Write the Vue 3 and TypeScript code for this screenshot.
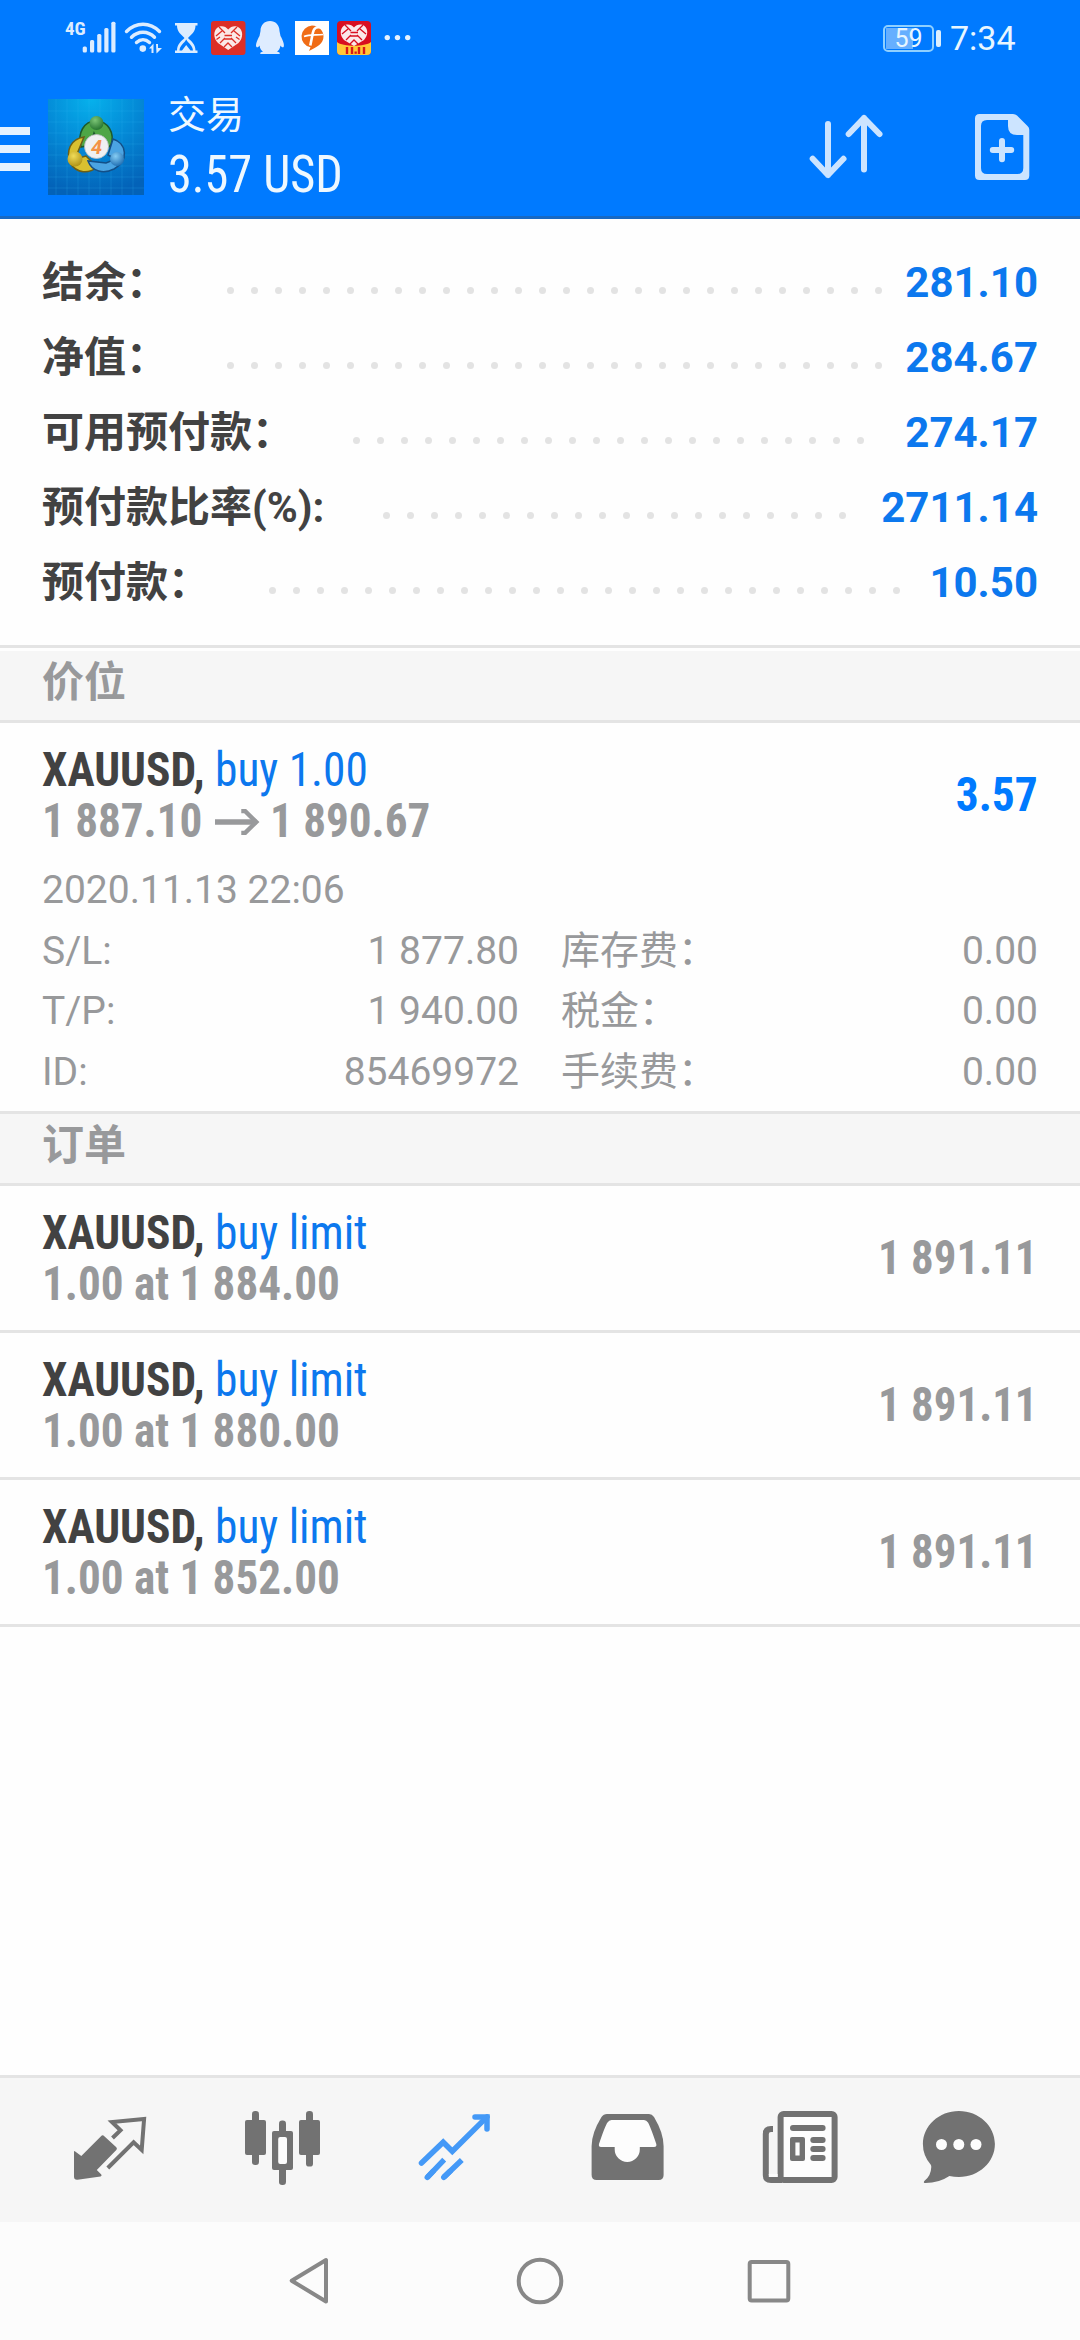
<script setup lang="ts">
interface SummaryRow {
  label: string
  value: string
  dots: number
}

interface Order {
  symbol: string
  kind: string
  terms: string
  price: string
}

const summary: SummaryRow[] = [
  { label: '结余：', value: '281.10', dots: 28 },
  { label: '净值：', value: '284.67', dots: 28 },
  { label: '可用预付款：', value: '274.17', dots: 22 },
  { label: '预付款比率(%):', value: '2711.14', dots: 20 },
  { label: '预付款：', value: '10.50', dots: 27 },
]

const details: string[][] = [
  ['S/L:', '1 877.80', '库存费：', '0.00'],
  ['T/P:', '1 940.00', '税金：', '0.00'],
  ['ID:', '85469972', '手续费：', '0.00'],
]

const orders: Order[] = [
  { symbol: 'XAUUSD,', kind: 'buy limit', terms: '1.00 at 1 884.00', price: '1 891.11' },
  { symbol: 'XAUUSD,', kind: 'buy limit', terms: '1.00 at 1 880.00', price: '1 891.11' },
  { symbol: 'XAUUSD,', kind: 'buy limit', terms: '1.00 at 1 852.00', price: '1 891.11' },
]
</script>

<template>
  <div class="screen">
    <header class="top">
      <div class="status">
        <span class="net">4G</span>
        <svg class="status-icons" width="336" height="40" viewBox="82 18 336 40">
          <g fill="#dcecff">
            <rect x="82.7" y="46.5" width="4.2" height="6" rx="1.5" />
            <rect x="90" y="40" width="4.2" height="12.5" rx="1.5" />
            <rect x="97.2" y="34" width="4.2" height="18.5" rx="1.5" />
            <rect x="104.3" y="28" width="4.2" height="24.5" rx="1.5" />
            <rect x="111.3" y="21.7" width="4.2" height="30.8" rx="1.5" />
          </g>
          <g fill="none" stroke="#dcecff" stroke-width="3.4" stroke-linecap="round">
            <path d="M126.5 31.5C136 21.8 150 21.8 159.5 31.5" />
            <path d="M131.5 37.3C138 30.6 148 30.6 154.5 37.3" />
            <path d="M136.5 42.5C140.5 38.7 145.5 38.7 149.5 42.5" />
          </g>
          <circle cx="142.8" cy="48.6" r="3.3" fill="#dcecff" />
          <path d="M149 48.5L153.500 43.5V53H151.5V48.5ZM156 44H158V48H162L156.5 53.5Z" fill="#dcecff" />
          <g fill="#dcecff">
            <path d="M175 23H197.500V25.600H195.500C195.500 32 191 35 188 38C191 41 195.500 44 195.500 50.400H197.500V53H175V50.400H177C177 44 181.500 41 184.500 38C181.500 35 177 32 177 25.600H175Z" />
            <path d="M179.500 50.400C180 45 184 43.500 186.200 39.500C188.500 43.500 192.500 45 193 50.400H190.500L186.200 45L182 50.400Z" fill="#007aff" />
          </g>
          <rect x="211" y="21" width="34.5" height="34" rx="3" fill="#dc2f27" />
          <path d="M228.200 50L218 43C213 38 213.500 31 217 28C220.500 25 225.500 26 228.200 29.500C231 26 236 25 239.500 28C243 31 243.500 38 238.500 43Z" fill="#fbe9e6" />
          <path d="M219 27L225 33M237 27L231 33M216 36L222 31M240 36L234 31M220 43L225 38M236 43L231 38M224 47L228 43L232 47M224.500 35.500H232M224.500 39H232M216.500 39.500L220 37M239.500 39.500L236 37" stroke="#dc2f27" stroke-width="1.300" fill="none" />
          <path d="M270 21C275.500 21 279.500 25 279.500 31L280.500 36C282.500 39.500 284.500 44 283.800 46.500C283 48.500 281 46.500 280.500 45.500C280 48.500 279 50.500 277 51.500C279 52 280.500 53 279.500 54H260.500C259.500 53 261 52 263 51.500C261 50.500 260 48.500 259.500 45.500C259 46.500 257 48.500 256.200 46.500C255.500 44 257.500 39.500 259.500 36L260.500 31C260.500 25 264.500 21 270 21Z" fill="#deecff" />
          <rect x="295" y="21" width="34" height="34" fill="#fff" />
          <path d="M312 25.500A11.500 11 0 0 1 323.500 36.500C323.500 44 317 46.500 309 51L310.500 47.300A11 11 0 0 1 312 25.500Z" fill="#f06c15" />
          <path d="M324 28.500C317 25.500 313.800 27.500 312.800 33L310.300 45.500" fill="none" stroke="#fff" stroke-width="2.600" />
          <path d="M304 36.500C310 33.800 316 35.500 323 34.500" fill="none" stroke="#fff" stroke-width="1.700" />
          <rect x="337" y="21" width="34" height="34" rx="4" fill="#d80f20" />
          <path d="M337 42C343 47 365 47 371 42V51Q371 55 367 55H341Q337 55 337 51Z" fill="#ffc838" />
          <path d="M354 46L344 40C339.500 35 340 29 343.500 26C347 23.500 351.500 24.500 354 27.500C356.500 24.500 361 23.500 364.500 26C368 29 368.500 35 364 40Z" fill="#fbe9ea" />
          <path d="M345 25L351 31M363 25L357 31M342 34L348 29M366 34L360 29M346 40L351 35M362 40L357 35M350 44L354 40L358 44M350.500 32.500H358M350.500 36H358" stroke="#d80f20" stroke-width="1.300" fill="none" />
          <path d="M347 47V54M352 47V54M359 47V54M364 47V54" stroke="#d81818" stroke-width="2.400" />
          <rect x="354.5" y="51.5" width="2.3" height="2.3" fill="#d81818" />
          <g fill="#e6f2ff">
            <circle cx="387.3" cy="37.6" r="2.7" />
            <circle cx="397.5" cy="37.6" r="2.7" />
            <circle cx="407.7" cy="37.6" r="2.7" />
          </g>
        </svg>
        <div class="battery"><span class="charge"></span><span class="pct">59</span></div>
        <span class="nub"></span>
        <span class="clock">7:34</span>
      </div>

      <div class="bar">
        <div class="menu"><i></i><i></i><i></i></div>
        <svg class="logo" width="96" height="96" viewBox="0 0 96 96">
          <defs>
            <radialGradient id="sky" cx="0.45" cy="0" r="1">
              <stop offset="0" stop-color="#06b1ec" />
              <stop offset="0.5" stop-color="#0489d6" />
              <stop offset="1" stop-color="#0362b8" />
            </radialGradient>
            <radialGradient id="green" cx="0.4" cy="0.3" r="0.8">
              <stop offset="0" stop-color="#7cc576" />
              <stop offset="1" stop-color="#1c6b28" />
            </radialGradient>
            <radialGradient id="gold" cx="0.4" cy="0.3" r="0.8">
              <stop offset="0" stop-color="#f0dc58" />
              <stop offset="1" stop-color="#a88a10" />
            </radialGradient>
            <radialGradient id="azure" cx="0.4" cy="0.3" r="0.8">
              <stop offset="0" stop-color="#86cdf4" />
              <stop offset="1" stop-color="#1565ac" />
            </radialGradient>
          </defs>
          <rect width="96" height="96" fill="url(#sky)" />
          <path d="M8 0V96M19 0V96M30 0V96M41 0V96M52 0V96M63 0V96M74 0V96M85 0V96M0 12H96M0 23H96M0 34H96M0 45H96M0 56H96M0 67H96M0 78H96M0 89H96" stroke="#35b5ee" stroke-opacity="0.2" stroke-width="1" />
          <path d="M33 48C29 34 36 22 48 22C60 22 67 34 63 46L55 52L46 34L42 46Z" fill="#4ea646" stroke="#1d5a2c" stroke-width="1.5" />
          <path d="M36 38C22 40 18 52 22 64C29 75 41 75 49 68L38 57L27 60Z" fill="#d9c030" stroke="#6b5e16" stroke-width="1.5" />
          <path d="M40 62C44 73 56 75 66 70C81 62 79 44 65 40L60 56L68 60L58 64Z" fill="#4ba4e2" stroke="#134f87" stroke-width="1.5" />
          <circle cx="48.5" cy="24" r="7" fill="url(#green)" />
          <circle cx="27" cy="60" r="7.5" fill="url(#gold)" />
          <circle cx="69" cy="60" r="7" fill="url(#azure)" />
          <circle cx="48.5" cy="47.500" r="12" fill="#eff0f2" stroke="#b9bcc2" stroke-width="0.8" />
          <text x="48.5" y="55" text-anchor="middle" font-family="Roboto, sans-serif" font-weight="700" font-style="italic" font-size="20" fill="#f39246">4</text>
        </svg>
        <div class="titles">
          <div class="title">交易</div>
          <div class="total cond">3.57 USD</div>
        </div>
        <svg class="sort" width="76" height="72" viewBox="808 110 76 72" fill="none" stroke="#cce4ff" stroke-width="6" stroke-linecap="round" stroke-linejoin="round">
          <path d="M828 124V175M812.700 158.800L828 175L843.500 158.800" />
          <path d="M864 169.500V118M848.700 134L864 118L879.500 134" />
        </svg>
        <svg class="add" width="56" height="68" viewBox="974 113 56 68">
          <path fill="#cce4ff" fill-rule="evenodd" d="M979.500 114H1013Q1015.500 114 1017 115.500L1027.500 126Q1029.300 127.500 1029.300 130V175.500Q1029.300 180 1025 180H979.500Q975 180 975 175.500V118.500Q975 114 979.500 114ZM987 120Q981 120 981 126V168Q981 174 987 174H1017.300Q1023.300 174 1023.300 168V135H1017Q1008 135 1008 126V120Z" />
          <path d="M1002 141V159.300M992.800 150H1011.200" stroke="#cce4ff" stroke-width="6" stroke-linecap="round" />
        </svg>
      </div>
    </header>

    <section class="summary">
      <div v-for="row in summary" :key="row.label" class="sum-row">
        <span class="sum-label">{{ row.label }}</span>
        <span class="leader"><i v-for="n in row.dots" :key="n"></i></span>
        <span class="sum-value">{{ row.value }}</span>
      </div>
    </section>

    <h2 class="group first">价位</h2>
    <section class="position">
      <div class="deal">
        <div>
          <div class="line cond"><b>XAUUSD,</b> <span class="kind">buy 1.00</span></div>
          <div class="line cond terms">
            <span>1 887.10</span>
            <svg class="arrow" width="48" height="26" viewBox="0 0 48 26" fill="none" stroke="#98999b" stroke-width="5.5">
              <path d="M0 13H44" />
              <path d="M28 2H32L44 13L32 24H28" stroke-width="4.5" />
            </svg>
            <span>1 890.67</span>
          </div>
        </div>
        <div class="profit cond">3.57</div>
      </div>
      <div class="details">
        <div class="detail">2020.11.13 22:06</div>
        <div v-for="d in details" :key="d[0]" class="detail">
          <div class="pair"><span>{{ d[0] }}</span><span>{{ d[1] }}</span></div>
          <div class="pair"><span>{{ d[2] }}</span><span>{{ d[3] }}</span></div>
        </div>
      </div>
    </section>

    <h2 class="group">订单</h2>
    <section class="orders">
      <div v-for="o in orders" :key="o.terms" class="order">
        <div>
          <div class="line cond"><b>{{ o.symbol }}</b> <span class="kind">{{ o.kind }}</span></div>
          <div class="line cond terms">{{ o.terms }}</div>
        </div>
        <div class="price cond">{{ o.price }}</div>
      </div>
    </section>

    <nav class="tabs">
      <svg class="tab" viewBox="0 0 84 84">
        <path d="M6 48Q6 46.500 7.200 47.500L13.300 52L33 32.200Q34.600 30.500 36.300 32.200L48.300 43.300Q49.600 44.700 48.300 46.100L28.800 66L33.300 70.600Q34.200 72 32.500 72.400L9.500 75.700Q6 76 6 72.500Z" fill="#727272" />
        <path d="M44.500 34L52.500 26.300L44 18L76.100 15L73.700 46L65.600 38.300L39.800 64" fill="none" stroke="#727272" stroke-width="4" />
      </svg>
      <svg class="tab" viewBox="0 0 84 84" fill="#727272">
        <rect x="4" y="16" width="21" height="35" rx="2" />
        <rect x="11" y="7" width="7" height="54" rx="3.2" />
        <rect x="58" y="16" width="21" height="35" rx="2" />
        <rect x="65" y="7" width="7" height="55.6" rx="3.2" />
        <rect x="31" y="27" width="21" height="39" rx="2" />
        <rect x="38" y="16.5" width="7" height="64.5" rx="3.2" />
        <rect x="37.2" y="33" width="8.8" height="27" rx="2" fill="#fdfdfd" />
      </svg>
      <svg class="tab" viewBox="0 0 84 84" fill="none" stroke="#4499f7" stroke-width="5.500">
        <path d="M8.500 59L30.200 38.200L39.300 47.300L74 12.900" stroke-linecap="round" />
        <path d="M62 12.900H74V25" stroke-linecap="round" />
        <path d="M14.300 73.300L31.200 55.700M30.800 73.300L48.800 56" />
        <path d="M14.300 73.300L20 67.400M30.800 73.300L37 67.300" stroke-linecap="round" />
      </svg>
      <svg class="tab" viewBox="0 0 84 84">
        <path fill="#727272" d="M21 10H63Q66 10 68 13Q77.600 29 77.600 42V71Q77.600 76 72.600 76H10.600Q5.600 76 5.600 71V42Q5.600 29 15.500 13Q17.500 10 21 10Z" />
        <path fill="#fdfdfd" d="M25.500 16H58Q60.500 16 62 18.500Q64 21.500 70.300 40Q71 43 68 43H53.800V45.500A12.500 12.500 0 0 1 28.700 45.500V43H15Q12.300 43 13 40Q19 22 21.500 18.500Q23 16 25.500 16Z" />
      </svg>
      <svg class="tab" viewBox="0 0 84 84">
        <rect x="22.6" y="10" width="54" height="66" rx="3" fill="#fdfdfd" stroke="#727272" stroke-width="6" />
        <path d="M15 25H13Q7.800 25 7.800 30V71Q7.800 76 13 76H24" fill="none" stroke="#727272" stroke-width="6" />
        <rect x="10.8" y="70" width="8.8" height="3" fill="#fdfdfd" />
        <g fill="#727272">
          <rect x="32" y="21" width="35.6" height="6" rx="3" />
          <rect x="52.3" y="33" width="15.3" height="6" rx="3" />
          <rect x="52.3" y="42" width="15.3" height="6" rx="3" />
          <rect x="52.3" y="51" width="15.3" height="6" rx="3" />
          <rect x="32" y="33" width="15" height="24" rx="2" />
        </g>
        <rect x="37.4" y="38.5" width="4.2" height="13" fill="#fdfdfd" />
      </svg>
      <svg class="tab" viewBox="0 0 84 84">
        <path fill="#727272" d="M41.900 7C61.800 7 77.900 21.800 77.900 40S61.800 73 41.900 73Q37 73 32.400 72Q22 79 8.500 79Q5.900 79 7.300 77Q14 72 14.300 63Q14.400 61.600 13.600 60.500Q5.900 51.500 5.900 40C5.900 21.800 22 7 41.900 7Z" />
        <g fill="#fdfdfd">
          <circle cx="24.5" cy="40.5" r="5.5" />
          <circle cx="41.8" cy="40.5" r="5.5" />
          <circle cx="59" cy="40.5" r="5.5" />
        </g>
      </svg>
    </nav>

    <footer class="sysnav">
      <svg width="52" height="52" viewBox="0 0 52 52" fill="none" stroke="#888" stroke-width="4" stroke-linejoin="round">
        <path d="M6.700 25.700L41 5V46.500Z" />
      </svg>
      <svg width="52" height="52" viewBox="0 0 52 52" fill="none" stroke="#888" stroke-width="4">
        <circle cx="26" cy="26" r="21.3" />
      </svg>
      <svg width="52" height="52" viewBox="0 0 52 52" fill="none" stroke="#888" stroke-width="4">
        <rect x="6.7" y="7" width="38.6" height="38.6" rx="2" />
      </svg>
    </footer>
  </div>
</template>

<style>
body {
  background: #fefefe;
}
</style>

<style scoped>
.screen {
  width: 1080px;
  height: 2340px;
  display: flex;
  flex-direction: column;
  background: #fefefe;
  font-family: Roboto, "Noto Sans CJK SC", sans-serif;
  color: #424242;
  overflow: hidden;
}

.cond {
  font-family: "Roboto Condensed", Roboto, "Noto Sans CJK SC", sans-serif;
  font-stretch: 75%;
  transform: scaleX(0.946);
  transform-origin: left center;
}

.top {
  height: 216px;
  flex: none;
  background: #007aff;
  border-bottom: 3px solid #1769c4;
}

.status {
  height: 76px;
  display: flex;
  align-items: center;
  padding-left: 65px;
}

.net {
  width: 17px;
  font-size: 19px;
  line-height: 20px;
  font-weight: 700;
  color: #dcecff;
  margin-bottom: 18px;
  font-stretch: 75%;
}

.status-icons {
  display: block;
}

.battery {
  position: relative;
  width: 51px;
  height: 27px;
  box-sizing: border-box;
  border: 2px solid #8fd0ff;
  border-radius: 5px;
  margin-left: 465px;
  text-align: center;
}

.charge {
  position: absolute;
  left: 1px;
  top: 1px;
  width: 27px;
  height: 21px;
  background: #66afff;
}

.pct {
  position: relative;
  display: block;
  color: #e8f6ff;
  font-size: 25px;
  line-height: 23px;
}

.nub {
  width: 5px;
  height: 17px;
  border-radius: 2px;
  background: #dcefff;
  margin-left: 2px;
}

.clock {
  margin-left: 9px;
  font-size: 34px;
  line-height: 40px;
  color: #e8f6ff;
}

.bar {
  height: 140px;
  display: flex;
  align-items: flex-start;
}

.menu {
  width: 30px;
  margin: 51px 18px 0 0;
  display: flex;
  flex-direction: column;
  gap: 10px;
}

.menu i {
  height: 8px;
  background: #e6f3ff;
}

.logo {
  margin-top: 23px;
}

.titles {
  width: 640px;
  margin: 15px 0 0 24px;
  color: #eef8ff;
}

.title {
  font-size: 38px;
  line-height: 48px;
}

.total {
  margin-top: 5px;
  font-size: 51px;
  line-height: 62px;
}

.sort {
  margin: 34px 0 0 0;
}

.add {
  margin: 37px 0 0 90px;
}

.summary {
  padding: 26px 42px 25px;
  border-bottom: 3px solid #e4e4e4;
}

.sum-row {
  height: 75px;
  line-height: 75px;
  font-size: 42px;
  font-weight: 700;
  display: flex;
  align-items: center;
}

.leader {
  display: flex;
  margin-left: 50px;
  padding-top: 15px;
}

.leader i {
  width: 7px;
  height: 7px;
  border-radius: 50%;
  background: #e3e3e3;
  margin: 0 8.5px;
}

.sum-value {
  margin-left: auto;
  color: #0c78ee;
}

.group {
  margin: 0;
  height: 69px;
  flex: none;
  line-height: 63px;
  padding-left: 42px;
  font-size: 42px;
  font-weight: 700;
  color: #98999b;
  background: #f6f6f6;
  border-bottom: 3px solid #e4e4e4;
}

.group.first {
  margin-top: 3px;
}

.position {
  height: 388px;
  flex: none;
  border-bottom: 3px solid #e4e4e4;
}

.deal,
.order {
  display: flex;
  justify-content: space-between;
  padding: 21px 42px 0;
}

.order {
  height: 147px;
  box-sizing: border-box;
  border-bottom: 3px solid #e4e4e4;
}

.line {
  height: 51px;
  line-height: 51px;
  font-size: 48px;
  white-space: pre;
}

.line b {
  font-weight: 700;
}

.kind {
  color: #0c78ee;
}

.terms {
  display: flex;
  align-items: center;
  font-weight: 700;
  color: #98999b;
}

.terms.cond {
  transform: scaleX(0.94);
}

.arrow {
  margin: 2px 11px 0 13px;
}

.profit,
.price {
  font-size: 48px;
  font-weight: 700;
  line-height: 102px;
  transform-origin: right center;
}

.profit {
  color: #007aff;
}

.price {
  color: #98999b;
  transform: scaleX(0.935);
}

.details {
  margin-top: 14px;
  padding: 0 42px;
  font-size: 39px;
  color: #98999b;
}

.detail {
  height: 60.5px;
  line-height: 60.5px;
  display: flex;
  justify-content: space-between;
}

.pair {
  width: 477px;
  display: flex;
  justify-content: space-between;
}

.tabs {
  margin-top: auto;
  height: 144px;
  flex: none;
  border-top: 3px solid #e4e4e4;
  background: #f6f6f6;
  display: flex;
  padding-left: 68px;
  gap: 88.5px;
}

.tab {
  width: 84px;
  height: 84px;
  flex: none;
  margin-top: 26px;
}

.tab:last-child {
  margin-left: -14px;
}

.sysnav {
  height: 118px;
  flex: none;
  background: #fcfcfc;
  display: flex;
  justify-content: center;
  align-items: center;
  gap: 177px;
}
</style>
